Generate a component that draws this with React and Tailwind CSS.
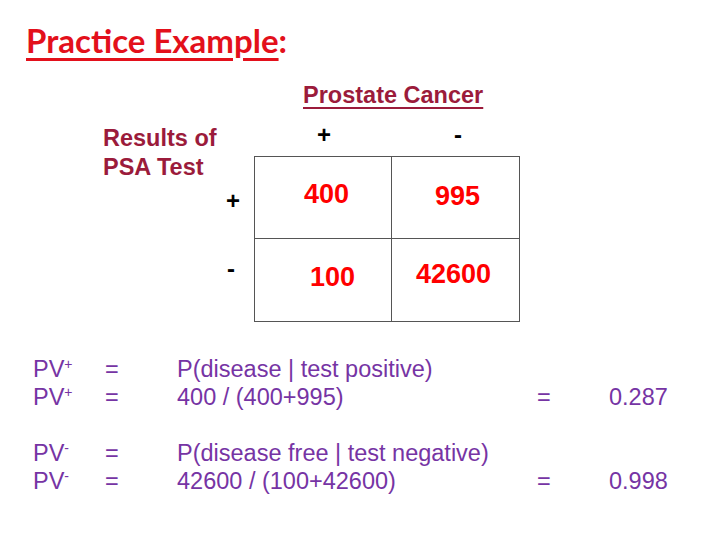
import React from 'react';

const arial = { fontFamily: '"Liberation Sans", Arial, sans-serif' };

const rows = [
  { label: 'PV', sup: '+', expr: 'P(disease | test positive)' },
  { label: 'PV', sup: '+', expr: '400 / (400+995)', result: '0.287' },
  null,
  { label: 'PV', sup: '-', expr: 'P(disease free | test negative)' },
  { label: 'PV', sup: '-', expr: '42600 / (100+42600)', result: '0.998' },
];

const App = () => {
  return (
    <div className="w-[720px] h-[540px] bg-white overflow-hidden font-['Liberation_Sans',Arial,sans-serif]">
      {/* Title */}
      <div className="pl-[26px] pt-[19px] h-[80px]">
        <span className="font-['Lato','Open_Sans',sans-serif] font-bold text-[33px] leading-[42px] text-[#e3101b]">
          <span className="underline decoration-[3px] underline-offset-[5px]">Practice Example</span>:
        </span>
      </div>

      {/* Contingency table */}
      <div className="pl-[303px] h-[36px] pt-[2px]">
        <span className="font-bold text-[23.5px] leading-[26px] text-[#9b1b3b] underline decoration-2 underline-offset-[4px]">
          Prostate Cancer
        </span>
      </div>

      <div className="flex pl-[103px]">
        <div className="w-[151px] flex flex-col">
          <div className="font-bold text-[23.5px] leading-[29px] text-[#9b1b3b] pt-[8px]">
            Results of
            <br />
            PSA Test
          </div>
          <div className="flex justify-end pr-[14px] h-[58px] items-start pt-[1px] font-bold text-[24px] text-black">+</div>
          <div className="flex justify-end pr-[19px] h-[40px] items-center pt-[18px] font-bold text-[24px] text-black">-</div>
        </div>
        <div className="flex flex-col">
          <div className="flex h-[40px] items-center font-bold text-[24px] text-black">
            <div className="w-[137px] pl-[63px] pb-[2px]">+</div>
            <div className="w-[128px] pl-[63px] pb-[2px]">-</div>
          </div>
          <div className="grid grid-cols-[137px_128px] grid-rows-[82px_82px] w-[266px] border border-[#555] font-bold text-[27px] text-[#ff0000]">
            <div className="border-r border-b border-[#555] pl-[49px] pt-[22px] leading-[30px]">400</div>
            <div className="border-b border-[#555] pl-[43px] pt-[24px] leading-[30px]">995</div>
            <div className="border-r border-[#555] pl-[55px] pt-[23px] leading-[30px]">100</div>
            <div className="pl-[24px] pt-[20px] leading-[30px]">42600</div>
          </div>
        </div>
      </div>

      {/* Predictive values */}
      <div className="pl-[33px] pt-[33px] text-[#7634a4] text-[23.5px] leading-[28px]" style={arial}>
        {rows.map((r, i) =>
          r ? (
            <div key={i} className="flex h-[28px] items-center">
              <div className="w-[72px]">
                {r.label}
                <span className="text-[14px] leading-[14px] align-top relative top-[2px]">{r.sup}</span>
              </div>
              <div className="w-[72px]">=</div>
              <div className="w-[360px]">{r.expr}</div>
              {r.result && (
                <>
                  <div className="w-[72px]">=</div>
                  <div>{r.result}</div>
                </>
              )}
            </div>
          ) : (
            <div key={i} className="h-[28px]" />
          )
        )}
      </div>
    </div>
  );
};

export default App;
